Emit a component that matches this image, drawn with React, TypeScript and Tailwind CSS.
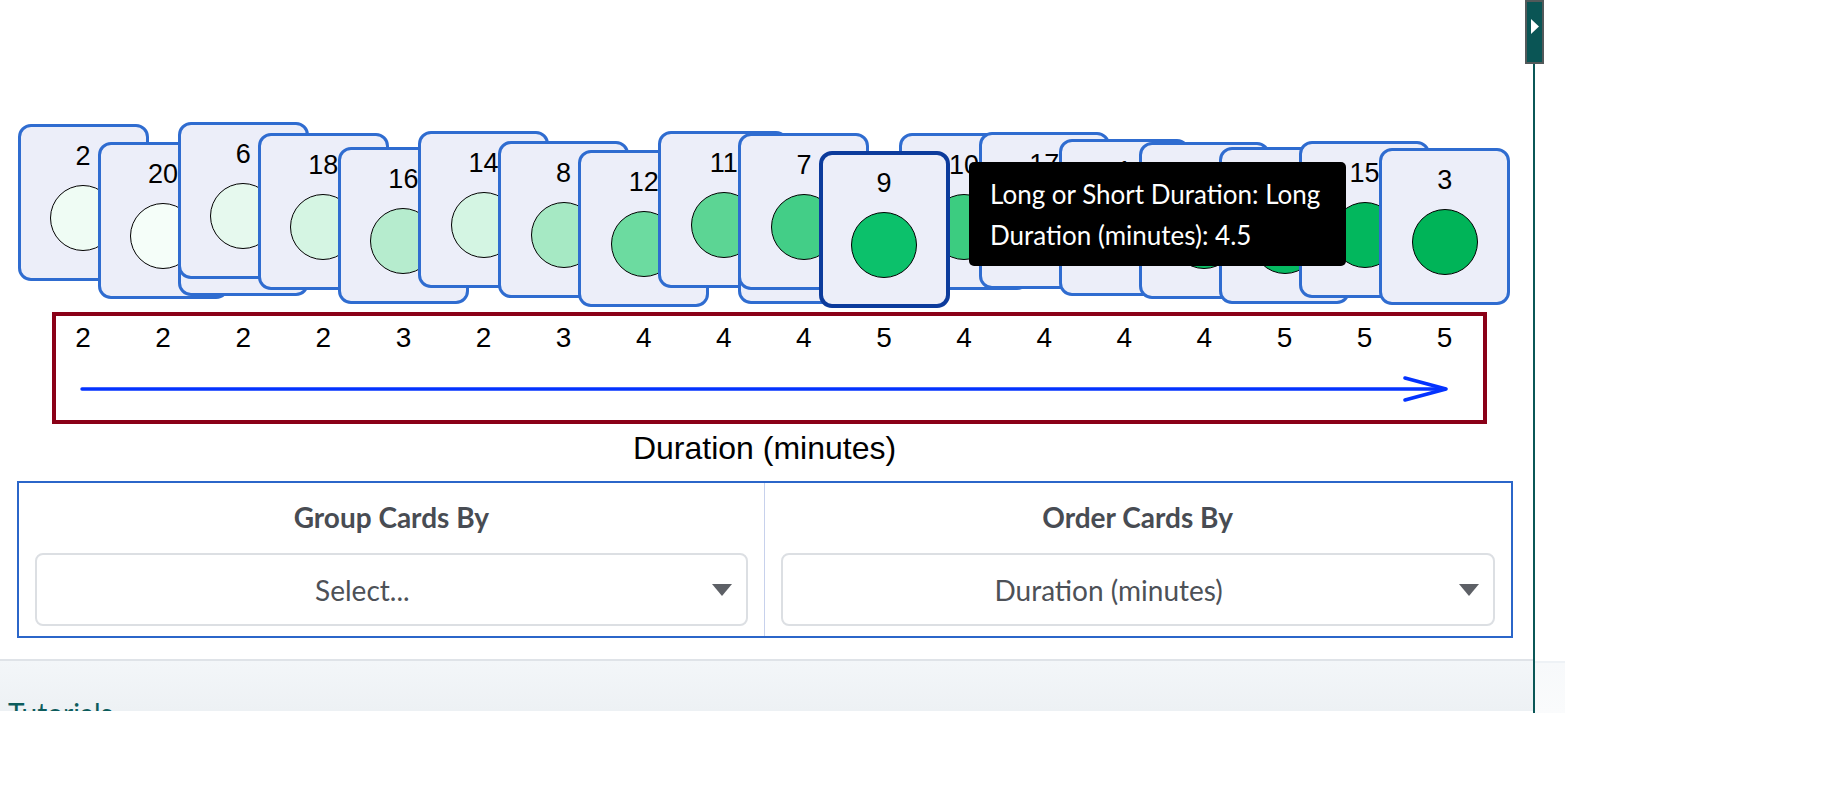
import React from "react";

type CardItem = {
  label: string;
  slot: number;
  top: number;
  fill: string;
  active?: boolean;
};

// cards in paint order; two cards share a slot with the one after them
const cards: CardItem[] = [
  { label: "2", slot: 0, top: 124, fill: "#effcf4" },
  { label: "20", slot: 1, top: 142.3, fill: "#f5fef9" },
  { label: "5", slot: 2, top: 139, fill: "#e9f9f0" },
  { label: "6", slot: 2, top: 121.7, fill: "#e6f9ee" },
  { label: "18", slot: 3, top: 132.7, fill: "#d5f5e3" },
  { label: "16", slot: 4, top: 147.3, fill: "#b6ecce" },
  { label: "14", slot: 5, top: 130.7, fill: "#d4f5e3" },
  { label: "8", slot: 6, top: 141, fill: "#a6e9c4" },
  { label: "12", slot: 7, top: 150, fill: "#6cdba0" },
  { label: "11", slot: 8, top: 130.7, fill: "#5cd594" },
  { label: "13", slot: 9, top: 147, fill: "#48cf8a" },
  { label: "7", slot: 9, top: 132.7, fill: "#43ce87" },
  { label: "10", slot: 11, top: 133.3, fill: "#3ccc80" },
  { label: "17", slot: 12, top: 131.7, fill: "#22c473" },
  { label: "1", slot: 13, top: 139, fill: "#14c06c" },
  { label: "4", slot: 14, top: 142.3, fill: "#0dbd66" },
  { label: "19", slot: 15, top: 146.7, fill: "#06ba62" },
  { label: "15", slot: 16, top: 140.7, fill: "#02b75d" },
  { label: "3", slot: 17, top: 148, fill: "#00b458" },
  { label: "9", slot: 10, top: 150.7, fill: "#0cc16b", active: true },
];

const axisValues = ["2", "2", "2", "2", "3", "2", "3", "4", "4", "4", "5", "4", "4", "4", "4", "5", "5", "5"];

const arial = { fontFamily: '"Liberation Sans", Arial, sans-serif' };

function Card({ item }: { item: CardItem }) {
  return (
    <div
      className={
        "absolute w-[131px] h-[157px] rounded-[13px] bg-[#eceef9] flex flex-col items-center " +
        (item.active ? "border-4 border-[#0c3b9c] z-40" : "border-[3px] border-[#2f6cd0]")
      }
      style={{ left: 17.5 + 80.1 * item.slot, top: item.top }}
    >
      <div className={"text-[27px] leading-[31px] text-black " + (item.active ? "pt-[13px]" : "pt-[14px]")}>
        {item.label}
      </div>
      <div
        className="mt-[13px] w-[66px] h-[66px] rounded-full border-[1.6px] border-black"
        style={{ backgroundColor: item.fill }}
      />
    </div>
  );
}

function SelectBox({ title, value }: { title: string; value: string }) {
  return (
    <div className="flex flex-col px-4 pt-[17px] pb-[10px]">
      <div className="text-center text-[28px] leading-[34px] font-bold text-[#484c53]">{title}</div>
      <div className="mt-[19px] h-[73px] flex items-center border-2 border-[#dcdfe3] rounded-lg bg-white">
        <div className="flex-1 text-center text-[28px] leading-[34px] text-[#4d5157]">{value}</div>
        <div className="w-[58px] flex justify-end pr-[14px]">
          <svg width="20" height="12" viewBox="0 0 20 12">
            <polygon points="0,0 20,0 10,12" fill="#5d6066" />
          </svg>
        </div>
      </div>
    </div>
  );
}

export default function App() {
  return (
    <div className="w-[1832px] h-[789px] bg-white relative overflow-hidden" style={{ fontFamily: "Lato, sans-serif" }}>
      <div className="flex h-[713px] w-[1565px] overflow-hidden">
        {/* Main */}
        <div className="w-[1533px] flex flex-col shrink-0">
          {/* Card canvas */}
          <div className="relative h-[312px] shrink-0" style={arial}>
            {cards.map((c, i) => (
              <Card key={i} item={c} />
            ))}
            <div className="absolute left-[969px] top-[161.7px] w-[377px] h-[104px] bg-black rounded-[5px] z-50 pl-[21px] pt-[12.5px] text-white text-[26px] leading-[40.6px]" style={{ fontFamily: "Lato, sans-serif" }}>
              <div>Long or Short Duration: Long</div>
              <div>Duration (minutes): 4.5</div>
            </div>
          </div>

          {/* Axis */}
          <div className="ml-[52px] w-[1435px] h-[111.6px] border-4 border-[#8a0017] shrink-0" style={arial}>
            <div className="flex -ml-[13px] pt-[6.3px]">
              {axisValues.map((v, i) => (
                <div key={i} className="w-[80.1px] shrink-0 text-center text-[28px] leading-[32px] text-black">
                  {v}
                </div>
              ))}
            </div>
            <svg className="mt-[15px] block" width="1427" height="40" viewBox="0 0 1427 40">
              <line x1="26" y1="20" x2="1388" y2="20" stroke="#0433ff" strokeWidth="3.4" strokeLinecap="round" />
              <polyline points="1349,9 1390,20 1349,31" fill="none" stroke="#0433ff" strokeWidth="3.6" strokeLinecap="round" strokeLinejoin="round" />
            </svg>
          </div>
          <div className="ml-[17px] w-[1495px] mt-[6px] text-center text-[32px] leading-[37px] text-black" style={arial}>
            Duration (minutes)
          </div>

          {/* Controls */}
          <div className="ml-[17px] w-[1495.5px] mt-[14.6px] border-2 border-[#2b66c9] grid grid-cols-2 shrink-0">
            <div className="border-r-[1.5px] border-[#c7d1ec]">
              <SelectBox title="Group Cards By" value="Select..." />
            </div>
            <SelectBox title="Order Cards By" value="Duration (minutes)" />
          </div>

          {/* Footer */}
          <div className="mt-[21px] h-[52px] shrink-0 border-t-2 border-[#dfe3e8] bg-gradient-to-b from-[#f3f6f9] to-[#edf1f4] pl-[8px] pt-[35px] overflow-hidden">
            <span className="text-[28px] leading-[34px] text-[#0c5c5c]">Tutorials</span>
          </div>
        </div>

        {/* Collapsed sidebar */}
        <div className="w-[32px] shrink-0 border-l-2 border-[#0b5757] flex flex-col">
          <div className="flex-1" />
          <div className="h-[52px] border-t-2 border-[#eef2f6] bg-gradient-to-b from-[#f7f9fb] to-[#fafbfc]" />
        </div>
      </div>

      <button className="absolute left-[1525px] top-0 w-[19px] h-[64px] bg-[#0a5555] border-2 border-[#52595a] flex items-center justify-center pb-[12px]">
        <svg width="8" height="15" viewBox="0 0 8 15">
          <polygon points="0,0 8,7.5 0,15" fill="#ffffff" />
        </svg>
      </button>
    </div>
  );
}
